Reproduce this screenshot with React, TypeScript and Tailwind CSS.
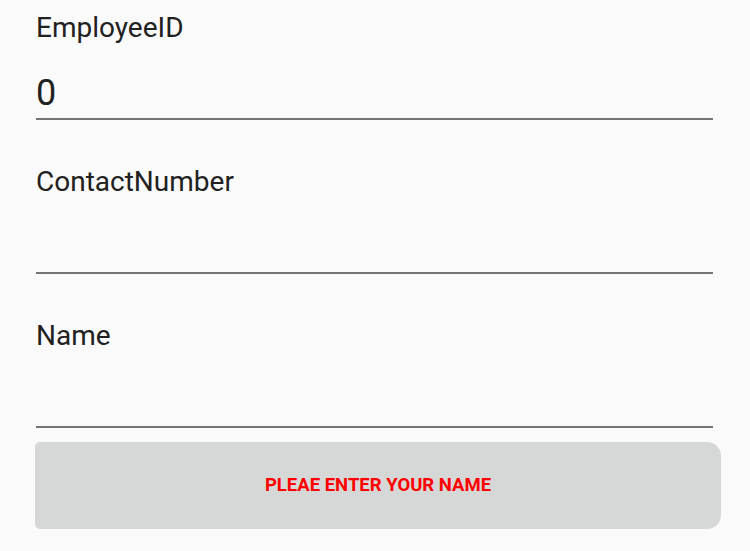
import React, { useState } from 'react';

interface FieldProps {
  label: string;
  value: string;
  onChange: (v: string) => void;
}

const Field: React.FC<FieldProps> = ({ label, value, onChange }) => (
  <div className="pb-[46px]">
    <label className="block h-[32px] text-[28px] leading-[32px] text-[#212121]">{label}</label>
    <div className="mt-[29px] border-b-2 border-[#757575] pb-[5px]">
      <input
        value={value}
        onChange={(e) => onChange(e.target.value)}
        className="block h-[40px] w-full bg-transparent p-0 text-[36px] leading-[40px] text-[#212121] outline-none"
      />
    </div>
  </div>
);

export default function App() {
  const [employeeId, setEmployeeId] = useState('0');
  const [contact, setContact] = useState('');
  const [name, setName] = useState('');

  return (
    <div className="h-[551px] w-[750px] overflow-hidden bg-[#fafafa] font-['Roboto',sans-serif]">
      <div className="pl-[36px] pr-[37px] pt-[12px]">
        <Field label="EmployeeID" value={employeeId} onChange={setEmployeeId} />
        <Field label="ContactNumber" value={contact} onChange={setContact} />
        <Field label="Name" value={name} onChange={setName} />
      </div>
      <div className="-mt-[32px] pl-[35px] pr-[29px]">
        <button className="flex h-[87px] w-full items-center justify-center rounded-l-[5px] rounded-r-[14px] bg-[#d6d7d7] text-[18.5px] font-bold uppercase text-[#ff0000]">
          Pleae enter your name
        </button>
      </div>
    </div>
  );
}
